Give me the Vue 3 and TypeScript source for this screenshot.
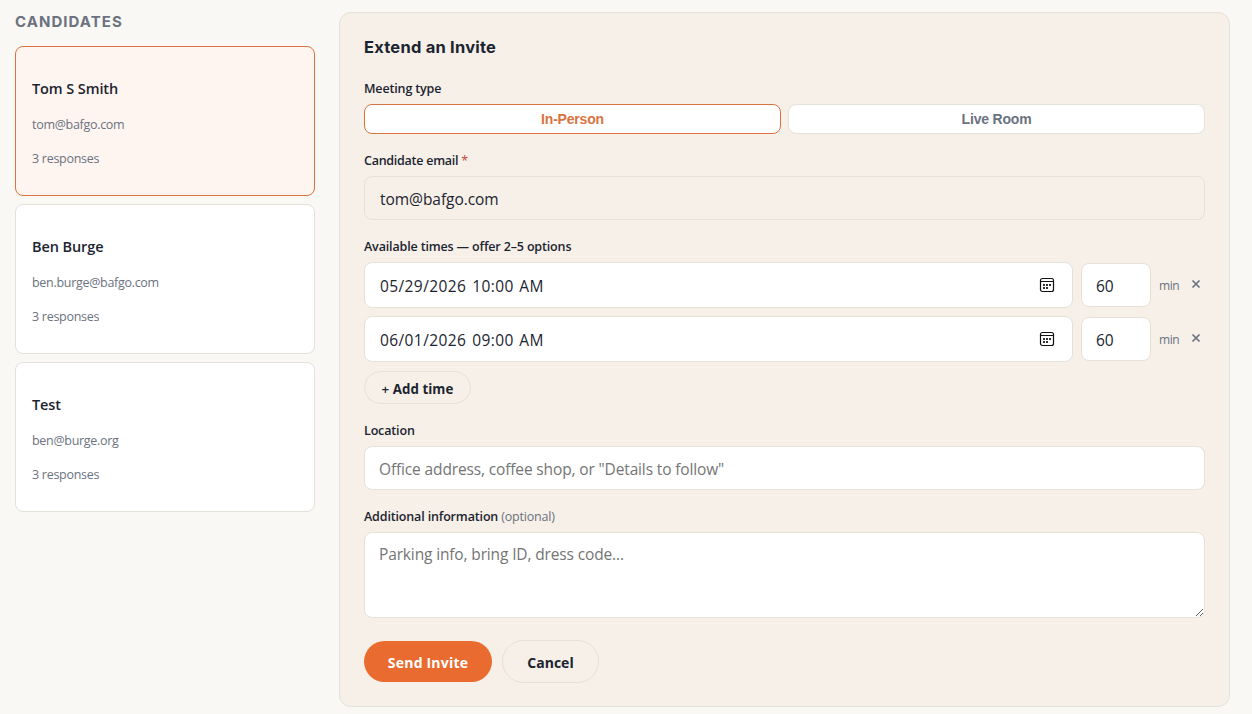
<script setup lang="ts">
import { ref } from 'vue'

interface Candidate {
  name: string
  email: string
  responses: number
}

interface TimeSlot {
  date: string
  time: string
  minutes: number
}

const candidates: Candidate[] = [
  { name: 'Tom S Smith', email: 'tom@bafgo.com', responses: 3 },
  { name: 'Ben Burge', email: 'ben.burge@bafgo.com', responses: 3 },
  { name: 'Test', email: 'ben@burge.org', responses: 3 },
]
const meetingTypes = ['In-Person', 'Live Room']

const selected = ref(0)
const meetingType = ref('In-Person')
const slots = ref<TimeSlot[]>([
  { date: '05/29/2026', time: '10:00 AM', minutes: 60 },
  { date: '06/01/2026', time: '09:00 AM', minutes: 60 },
])
const location = ref('')
const notes = ref('')

function addSlot() {
  if (slots.value.length < 5) slots.value.push({ date: '06/01/2026', time: '09:00 AM', minutes: 60 })
}

function removeSlot(index: number) {
  slots.value.splice(index, 1)
}
</script>

<template>
  <div class="page">
    <aside class="sidebar">
      <h2 class="side-title">CANDIDATES</h2>
      <div
        v-for="(c, i) in candidates"
        :key="c.email"
        class="card"
        :class="{ active: selected === i }"
        @click="selected = i"
      >
        <p class="name">{{ c.name }}</p>
        <p class="email">{{ c.email }}</p>
        <p class="count">{{ c.responses }} responses</p>
      </div>
    </aside>

    <main class="panel">
      <h1 class="title">Extend an Invite</h1>

      <div class="label">Meeting type</div>
      <div class="toggle">
        <button
          v-for="t in meetingTypes"
          :key="t"
          type="button"
          class="toggle-btn"
          :class="{ on: meetingType === t }"
          @click="meetingType = t"
        >{{ t }}</button>
      </div>

      <div class="label label-email">Candidate email <span class="required">*</span></div>
      <input class="field readonly" readonly :value="candidates[selected].email" />

      <div class="label">Available times — offer 2–5 options</div>
      <div class="slots">
        <div v-for="(s, i) in slots" :key="i" class="slot">
          <div class="datetime">
            <span class="date">{{ s.date }}</span>
            <span class="time">{{ s.time }}</span>
            <svg class="calendar" width="16" height="16" viewBox="0 0 16 16">
              <rect x="1.5" y="1.5" width="13" height="13" rx="2" fill="none" stroke="#111" stroke-width="1.2" />
              <path d="M1.5 4.5H14.5" stroke="#111" stroke-width="1" />
              <path
                d="M4 7h2v2H4zM7 7h2v2H7zM10 7h2v2h-2zM4 10h2v2H4zM7 10h2v2H7z"
                fill="#333"
              />
            </svg>
          </div>
          <input v-model="s.minutes" class="minutes" />
          <span class="unit">min</span>
          <button type="button" class="remove" aria-label="Remove time" @click="removeSlot(i)">
            <svg width="10" height="10" viewBox="0 0 10 10">
              <path d="M1.5 1.5L8.5 8.5M8.5 1.5L1.5 8.5" stroke="#6b7280" stroke-width="1.7" />
            </svg>
          </button>
        </div>
      </div>
      <button type="button" class="pill add" @click="addSlot"><span class="plus">+</span> Add time</button>

      <div class="label">Location</div>
      <input v-model="location" class="field" placeholder="Office address, coffee shop, or &quot;Details to follow&quot;" />

      <div class="label">Additional information <span class="optional">(optional)</span></div>
      <textarea v-model="notes" class="field area" placeholder="Parking info, bring ID, dress code..."></textarea>

      <div class="actions">
        <button type="button" class="pill send">Send Invite</button>
        <button type="button" class="pill cancel">Cancel</button>
      </div>
    </main>
  </div>
</template>

<style>
body {
  background: #f9f8f4;
}
</style>

<style scoped>
* {
  box-sizing: border-box;
}

.page {
  display: grid;
  grid-template-columns: 300px 891px;
  column-gap: 24px;
  height: 714px;
  padding: 12px 0 7px 15px;
  overflow: hidden;
  align-items: start;
  background: #f9f8f4;
  color: #1c2430;
  font-family: "Open Sans", "Noto Sans", sans-serif;
}

.sidebar {
  display: flex;
  flex-direction: column;
  gap: 8px;
}

.side-title {
  margin: 0;
  height: 26px;
  font: 700 15px/20px Inter, sans-serif;
  letter-spacing: 1.05px;
  color: #6b7280;
}

.card {
  height: 150px;
  padding: 29px 16px 0;
  border: 1px solid #e4e1d9;
  border-radius: 8px;
  background: #fff;
  cursor: pointer;
}

.card.active {
  border-color: #d9733f;
  background: #fff5f0;
}

.card p {
  margin: 0;
}

.card .name {
  font-size: 14.5px;
  font-weight: 600;
  line-height: 26px;
  letter-spacing: -0.1px;
}

.card .email {
  margin-top: 12px;
  font-size: 12.5px;
  line-height: 22px;
  letter-spacing: -0.3px;
  color: #6b7280;
}

.card .count {
  margin-top: 12px;
  font-size: 12.5px;
  line-height: 22px;
  letter-spacing: -0.28px;
  color: #6b7280;
}

.panel {
  display: flex;
  flex-direction: column;
  height: 695px;
  padding: 22px 24px 0;
  border: 1px solid #e4e1d9;
  border-radius: 12px;
  background: #f6f0e8;
}

.title {
  margin: 0 0 21px;
  font: 700 16.5px/24px Inter, sans-serif;
  letter-spacing: 0.22px;
}

.label {
  height: 24px;
  font-size: 12.5px;
  font-weight: 600;
  line-height: 18px;
  letter-spacing: -0.15px;
  white-space: nowrap;
}

.label-email {
  letter-spacing: -0.26px;
}

.required {
  color: #c2453a;
  font-weight: 400;
}

.optional {
  color: #6b7280;
  font-weight: 400;
  letter-spacing: -0.2px;
}

.toggle {
  display: grid;
  grid-template-columns: 1fr 1fr;
  gap: 7px;
  height: 30px;
  margin-bottom: 18px;
}

.toggle-btn {
  padding: 0;
  border: 1px solid #e4e1d9;
  border-radius: 8px;
  background: #fff;
  color: #6b7280;
  font: 700 14px/20px "Liberation Sans", Arial, sans-serif;
  letter-spacing: -0.2px;
}

.toggle-btn.on {
  border-color: #d9733f;
  color: #d9733f;
}

.field {
  flex: none;
  width: 100%;
  height: 44px;
  margin: 0 0 18px;
  padding: 2px 14px 0;
  border: 1px solid #e4e1d9;
  border-radius: 8px;
  outline: none;
  background: #fff;
  color: #1c2430;
  font: 400 15.5px/22px "Open Sans", "Noto Sans", sans-serif;
  letter-spacing: -0.14px;
}

.field.readonly {
  padding-left: 15px;
  background: #f6f0e8;
  letter-spacing: -0.05px;
}

.field::placeholder {
  color: #757575;
  opacity: 1;
}

.slots {
  display: flex;
  flex-direction: column;
  gap: 8px;
}

.slot {
  display: flex;
  align-items: center;
  height: 46px;
}

.datetime {
  display: flex;
  align-items: center;
  width: 709px;
  height: 46px;
  padding: 2px 17px 0 15px;
  border: 1px solid #e4e1d9;
  border-radius: 8px;
  background: #fff;
  font-size: 15.5px;
  line-height: 22px;
  letter-spacing: 0.4px;
}

.time {
  margin-left: 6px;
  word-spacing: 1px;
}

.calendar {
  margin: -2px 0 0 auto;
}

.minutes {
  width: 70px;
  height: 44px;
  margin: 0 8px;
  padding: 2px 14px 0;
  border: 1px solid #e4e1d9;
  border-radius: 8px;
  outline: none;
  background: #fff;
  color: #1c2430;
  font: 400 15.5px/22px "Open Sans", "Noto Sans", sans-serif;
}

.unit {
  width: 32px;
  color: #6b7280;
  font-size: 12px;
  letter-spacing: -0.4px;
}

.remove {
  display: flex;
  margin-top: -2px;
  padding: 0;
  border: 0;
  background: none;
}

.pill {
  border: 1px solid #e4e1d9;
  border-radius: 999px;
  background: transparent;
  color: #1c2430;
  font: 700 14px/20px "Open Sans", "Noto Sans", sans-serif;
  white-space: nowrap;
}

.add {
  align-self: flex-start;
  width: 107px;
  height: 33px;
  margin: 9px 0 18px;
  padding: 2px 0 0;
  font-size: 13.3px;
  letter-spacing: 0.05px;
}

.plus {
  font-weight: 600;
}

.area {
  height: 86px;
  margin-bottom: 22px;
  padding: 10px 14px;
  resize: vertical;
}

.actions {
  display: flex;
  align-items: center;
  gap: 10px;
}

.send {
  width: 128px;
  height: 41px;
  padding: 2px 0 0;
  border: 0;
  background: #e96b2f;
  color: #fff;
  letter-spacing: 0.2px;
}

.cancel {
  width: 97px;
  height: 43px;
  padding: 2px 0 0;
}
</style>
